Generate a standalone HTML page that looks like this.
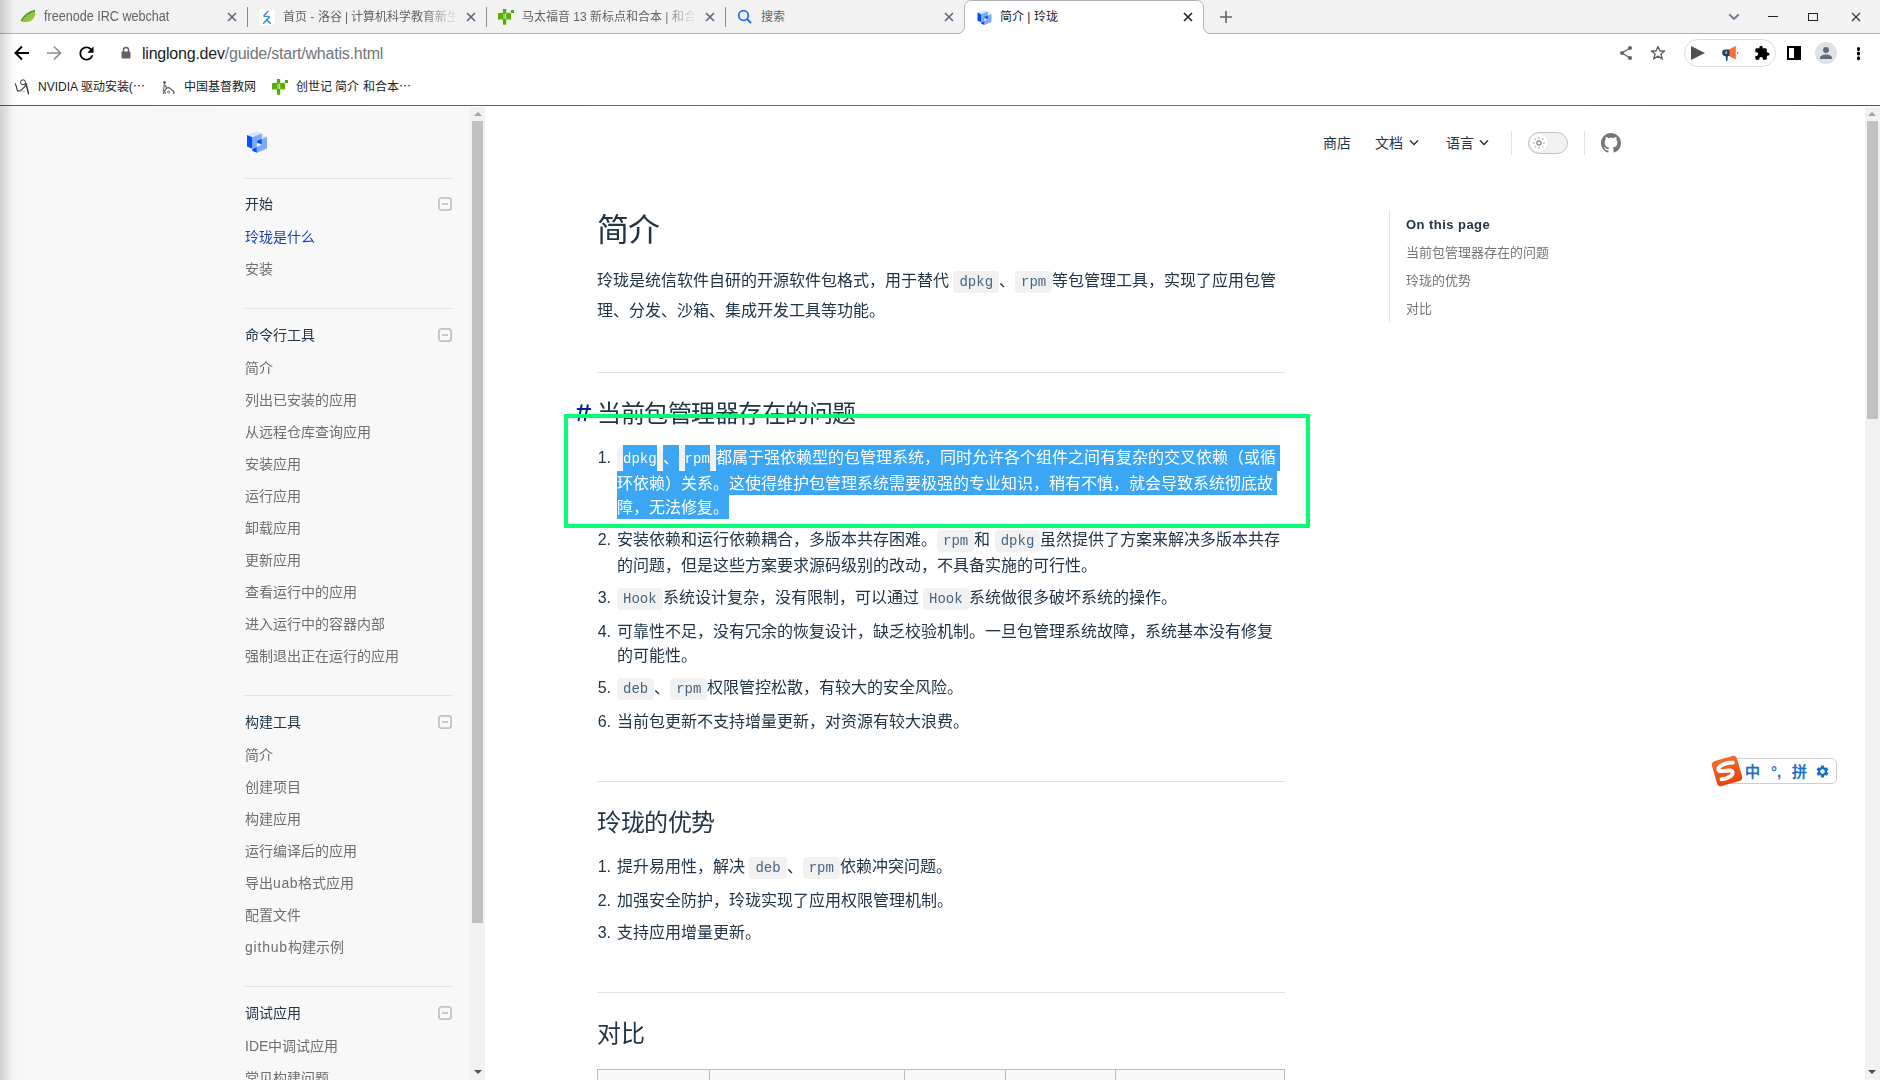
<!DOCTYPE html>
<html lang="zh-CN">
<head>
<meta charset="utf-8">
<style>
*{box-sizing:border-box;margin:0;padding:0}
html,body{width:1880px;height:1080px;overflow:hidden;background:#fff}
body{position:relative;font-family:"Liberation Sans",sans-serif;color:#213547}
.abs{position:absolute}
/* ---------- chrome ---------- */
#tabbar{position:absolute;left:0;top:0;width:1880px;height:34px;background:#f2f2f2;border-bottom:1px solid #b1b3b7}
.tab{position:absolute;top:0;height:34px;font-size:12px;color:#5f6368;white-space:nowrap}
.tab .t{position:absolute;top:9px;line-height:16px;overflow:hidden}
.tab .x{position:absolute;top:12px;width:10px;height:10px}
.sep{position:absolute;top:7px;width:1px;height:20px;background:#8b8b8b}
#active{position:absolute;left:964px;top:0;width:240px;height:35px;background:#fff;border:1px solid #b5b5b5;border-bottom:none;border-radius:7px 7px 0 0}
#toolbar{position:absolute;left:0;top:34px;width:1880px;height:71px;background:#fff}
#gradline{position:absolute;left:0;top:105px;width:1880px;height:1px;background:linear-gradient(90deg,#c41e5a 0%,#b92a7a 16%,#a03ac0 32%,#4668c8 43%,#2a90c2 53%,#0a94b8 80%,#0864b2 99%)}
/* ---------- page ---------- */
#sidebar{position:absolute;left:0;top:107px;width:470px;height:973px;background:#f8f8f8}
#sbtrack{position:absolute;left:470px;top:107px;width:15px;height:973px;background:#f1f1f1}
#sbthumb{position:absolute;left:472px;top:121px;width:11px;height:802px;background:#c1c1c1}
#pgtrack{position:absolute;left:1865px;top:107px;width:15px;height:973px;background:#f1f1f1}
#pgthumb{position:absolute;left:1867px;top:121px;width:11px;height:298px;background:#c1c1c1}
.arr-up{position:absolute;width:0;height:0;border-left:4px solid transparent;border-right:4px solid transparent;border-bottom:4px solid #a3a3a3}
.arr-dn{position:absolute;width:0;height:0;border-left:4px solid transparent;border-right:4px solid transparent;border-top:4px solid #505050}
.sb{position:absolute;left:244.5px;font-size:14px;line-height:20px;white-space:nowrap}
.sbt{color:#213547}
.sbi{color:#6e6e6e}
.sbh{position:absolute;left:245px;width:208px;height:1px;background:#e2e2e3}
.col{position:absolute;left:438px;width:14px;height:14px}
#shadow{position:absolute;left:0;top:0;width:20px;height:1080px;background:linear-gradient(90deg,rgba(0,0,0,.16) 0px,rgba(0,0,0,.113) 4px,rgba(0,0,0,.073) 8px,rgba(0,0,0,.024) 12px,rgba(0,0,0,.008) 16px,rgba(0,0,0,0) 20px)}
.doc{position:absolute;left:597px;white-space:nowrap;color:#213547}
.p{font-size:16px;line-height:28px}
code{font-family:"Liberation Mono",monospace;font-size:14px;color:#476582;background:#f1f1f1;border-radius:4px;padding:3px 6px}
.hr{position:absolute;left:597px;width:688px;height:1px;background:#e2e2e3}
.ln{position:absolute;left:617px;font-size:16px;line-height:24px;color:#213547;white-space:nowrap}
.mk{position:absolute;left:560px;width:51px;text-align:right;font-size:16px;line-height:24px;color:#213547}
.sel{position:absolute;background:#3aa6f4}
code.sc{background:transparent;color:#fff}

.toc{position:absolute;left:1406px;font-size:13px;color:#757575;white-space:nowrap}
.doc,.ln,.mk,.sb,.toc,.gs{will-change:transform}
</style>
</head>
<body>
<!-- tab bar -->
<div id="tabbar"></div>
<svg class="abs" style="left:940px;top:0" width="290" height="35" viewBox="940 0 290 35"><path d="M956.5 34A8 8 0 0 0 964.5 26V7A6.5 6.5 0 0 1 971 0.5H1197A6.5 6.5 0 0 1 1203.5 7V26A8 8 0 0 0 1211.5 34Z" fill="#fff"/><path d="M950 33.5H956.5A7 7 0 0 0 964.5 26.5V7A6.5 6.5 0 0 1 971 0.5H1197A6.5 6.5 0 0 1 1203.5 7V26.5A7 7 0 0 0 1211.5 33.5H1220" fill="none" stroke="#b1b3b7" stroke-width="1"/></svg>
<div class="sep" style="left:247px"></div>
<div class="sep" style="left:486px"></div>
<div class="sep" style="left:725px"></div>
<div class="tab" style="left:0">
  <svg class="abs" style="left:20px;top:10px" width="16" height="13" viewBox="0 0 16 13"><path d="M1 11 C3 5 9 1 15 0.5 C16 6 13 12 6 12 C4 12 2 12 1 11Z" fill="#8cc63f"/><path d="M1 11 C4 6 9 2 15 0.5" stroke="#4f7a28" stroke-width="1.2" fill="none"/></svg>
  <div class="t" style="left:44px;top:8px;width:170px;font-size:14px;transform:scaleX(.9);transform-origin:0 0">freenode IRC webchat</div>
  <svg class="x" style="left:227px" viewBox="0 0 10 10"><path d="M1 1L9 9M9 1L1 9" stroke="#5d6578" stroke-width="1.6"/></svg>
</div>
<div class="tab" style="left:0">
  <div class="abs" style="left:259px;top:9px;width:16px;height:16px;background:#fff;border-radius:3px"></div>
  <svg class="abs" style="left:255px;top:5px" width="24" height="24" viewBox="255 5 24 24"><path d="M267.8 11.4L264.2 15.3Q263.6 16.1 264.6 16.3L268.6 16.6Q269.8 16.8 269 17.8L263.6 23.3M266.6 19.6L270.3 23.3" stroke="#3a8bd8" stroke-width="1.5" fill="none" stroke-linecap="round" stroke-linejoin="round"/></svg>
  <div class="t" style="left:283px;width:175px;-webkit-mask-image:linear-gradient(90deg,#000 80%,transparent)">首页 - 洛谷 | 计算机科学教育新生态</div>
  <svg class="x" style="left:466px" viewBox="0 0 10 10"><path d="M1 1L9 9M9 1L1 9" stroke="#5d6578" stroke-width="1.6"/></svg>
</div>
<div class="tab" style="left:0">
  <svg class="abs" style="left:492px;top:4px" width="30" height="24" viewBox="266 74 30 24"><rect x="276.9" y="79" width="3.3" height="15.7" fill="#55ab05"/><path d="M272 83.3Q274.5 82.3 277 83V89.6Q274.5 88.8 272 89.8Z" fill="#5aae03"/><path d="M280.2 83Q282.6 82.3 285 83.3V89.8Q282.6 88.8 280.2 89.6Z" fill="#5aae03"/><rect x="277.6" y="83.6" width=".7" height="5.4" fill="#fff"/><rect x="278.9" y="83.6" width=".7" height="5.4" fill="#fff"/><rect x="284.9" y="80.1" width="3.1" height="2.9" rx=".6" fill="#4aa300"/></svg>
  <div class="t" style="left:522px;width:175px;-webkit-mask-image:linear-gradient(90deg,#000 80%,transparent)">马太福音 13 新标点和合本 | 和合本</div>
  <svg class="x" style="left:705px" viewBox="0 0 10 10"><path d="M1 1L9 9M9 1L1 9" stroke="#5d6578" stroke-width="1.6"/></svg>
</div>
<div class="tab" style="left:0">
  <svg class="abs" style="left:737px;top:9px" width="16" height="16" viewBox="0 0 16 16"><circle cx="6.5" cy="6.5" r="4.8" stroke="#1a73e8" stroke-width="1.8" fill="none"/><path d="M10 10L14 14" stroke="#1a73e8" stroke-width="2"/></svg>
  <div class="t" style="left:761px;width:175px">搜索</div>
  <svg class="x" style="left:944px" viewBox="0 0 10 10"><path d="M1 1L9 9M9 1L1 9" stroke="#5d6578" stroke-width="1.6"/></svg>
</div>
<div class="tab" style="left:0;color:#202124">
  <svg class="abs" style="left:974px;top:6.5px" width="21" height="21" viewBox="0 0 30 30"><path d="M5 8L15 4.2L19.7 6.2L10.3 10.2Z" fill="#dde7fb"/><path d="M19.7 6.2L25 10L19.7 12Z" fill="#dde7fb"/><path d="M10.3 10.2L19.7 6.2V12L25 10V21.6L14.8 25.8V20L10.3 21.8Z" fill="#7fa9f9"/><path d="M5 8L10.3 10.2V21.8L5 19.6Z" fill="#0052ff"/><path d="M15 14L19.7 12V17L15 15.6Z" fill="#0052ff"/><path d="M10.3 22L14.8 20V25.8L10.3 23.8Z" fill="#0052ff"/><path d="M14.8 16L19.6 17.6L14.8 20Z" fill="#f0f4fd"/></svg>
  <div class="t" style="left:1000px;width:175px">简介 | 玲珑</div>
  <svg class="x" style="left:1183px" viewBox="0 0 10 10"><path d="M1 1L9 9M9 1L1 9" stroke="#202124" stroke-width="1.6"/></svg>
</div>
<svg class="abs" style="left:1219px;top:10px" width="14" height="14" viewBox="0 0 14 14"><path d="M7 1V13M1 7H13" stroke="#5f6368" stroke-width="1.6"/></svg>
<!-- window controls -->
<svg class="abs" style="left:1728px;top:13px" width="12" height="8" viewBox="0 0 12 8"><path d="M1.3 1.3L6 6L10.7 1.3" stroke="#6a7390" stroke-width="1.8" fill="none"/></svg>
<div class="abs" style="left:1768px;top:16px;width:10px;height:1.3px;background:#222"></div>
<div class="abs" style="left:1808px;top:13px;width:10px;height:8px;border:1.3px solid #222"></div>
<svg class="abs" style="left:1851px;top:12px" width="10" height="10" viewBox="0 0 10 10"><path d="M1 1L9 9M9 1L1 9" stroke="#333" stroke-width="1.2"/></svg>

<!-- toolbar -->
<div id="toolbar"></div>
<svg class="abs" style="left:14px;top:45px" width="16" height="16" viewBox="0 0 16 16"><path d="M15 8H2M8 1.5L1.5 8L8 14.5" stroke="#000" stroke-width="1.9" fill="none"/></svg>
<svg class="abs" style="left:46px;top:45px" width="16" height="16" viewBox="0 0 16 16"><path d="M1 8H14M8 1.5L14.5 8L8 14.5" stroke="#8f8f8f" stroke-width="1.7" fill="none"/></svg>
<svg class="abs" style="left:75.5px;top:42.5px" width="21" height="21" viewBox="0 0 24 24"><path fill="#000" d="M17.65 6.35C16.2 4.9 14.21 4 12 4c-4.420 0-7.99 3.58-7.99 8s3.57 8 7.99 8c3.73 0 6.840-2.55 7.73-6h-2.08c-.82 2.330-3.04 4-5.65 4-3.31 0-6-2.69-6-6s2.69-6 6-6c1.66 0 3.14.69 4.22 1.78L13 11h7V4l-2.35 2.35z"/></svg>
<svg class="abs" style="left:121px;top:46px" width="10" height="13" viewBox="0 0 10 13"><path d="M2.5 6V4A2.5 2.5 0 0 1 7.5 4V6" stroke="#5f6368" stroke-width="1.5" fill="none"/><rect x="0.5" y="5.5" width="9" height="7" rx="1" fill="#5f6368"/></svg>
<div class="abs" style="left:142px;top:44px;font-size:16px;line-height:20px;letter-spacing:-0.22px;color:#202124;white-space:nowrap">linglong.dev<span style="color:#70757a">/guide/start/whatis.html</span></div>
<!-- toolbar right -->
<svg class="abs" style="left:1619px;top:45px" width="14" height="16" viewBox="0 0 14 16"><circle cx="11" cy="3" r="2" fill="#5f6368"/><circle cx="3" cy="8" r="2" fill="#5f6368"/><circle cx="11" cy="13" r="2" fill="#5f6368"/><path d="M11 3L3 8L11 13" stroke="#5f6368" stroke-width="1.4" fill="none"/></svg>
<svg class="abs" style="left:1650px;top:45px" width="16" height="16" viewBox="0 0 16 16"><path d="M8 1.5L9.9 6H14.7L10.9 9L12.3 14L8 11.1L3.7 14L5.1 9L1.3 6H6.1Z" stroke="#5f6368" stroke-width="1.4" fill="none" stroke-linejoin="round"/></svg>
<div class="abs" style="left:1684px;top:39px;width:92px;height:28px;border:1px solid #dadce0;border-radius:14px"></div>
<svg class="abs" style="left:1690px;top:46px" width="16" height="14" viewBox="0 0 16 14"><path d="M1 0L15 7L1 14Z" fill="#505050"/></svg>
<svg class="abs" style="left:1718px;top:42px" width="24" height="22" viewBox="1718 42 24 22"><path d="M1729 49.5L1735.9 45.8V59.5L1729 56.1Z" fill="#ff6a35"/><path d="M1725.5 49.5H1729.3V56.1H1725.5A3.3 3.3 0 0 1 1725.5 49.5Z" fill="#1d3f63"/><path d="M1725.6 56L1727.8 56L1727.3 61L1726.2 61Z" fill="#1d3f63"/><rect x="1725.2" y="51.2" width="2" height="2.8" fill="#a7a7a7"/><circle cx="1737.6" cy="53" r=".7" fill="#1d3f63"/><path d="M1736.3 45.5V59.8" stroke="#cfe8ff" stroke-width=".6"/></svg>
<svg class="abs" style="left:1753.6px;top:45.1px" width="16.2" height="16.2" viewBox="0 0 24 24"><path fill="#000" d="M20.5 11H19V7c0-1.1-.9-2-2-2h-4V3.5C13 2.12 11.88 1 10.5 1S8 2.120 8 3.5V5H4c-1.1 0-1.99.9-1.99 2v3.8H3.5c1.49 0 2.7 1.21 2.7 2.7s-1.21 2.7-2.7 2.7H2V20c0 1.1.9 2 2 2h3.8v-1.5c0-1.49 1.21-2.7 2.7-2.7 1.49 0 2.7 1.21 2.7 2.7V22H17c1.1 0 2-.9 2-2v-4h1.5c1.38 0 2.5-1.12 2.5-2.5S21.88 11 20.5 11z"/></svg>
<div class="abs" style="left:1787px;top:46px;width:14px;height:14px;border:2px solid #000;border-right:7px solid #000"></div>
<div class="abs" style="left:1815px;top:42px;width:22px;height:22px;border-radius:50%;background:#dee1e6"></div>
<svg class="abs" style="left:1818px;top:45px" width="16" height="16" viewBox="0 0 16 16"><circle cx="8" cy="5" r="3" fill="#5f6a7d"/><path d="M2 13.5C2 10.5 5 9.5 8 9.5S14 10.5 14 13.5V14H2Z" fill="#5f6a7d"/></svg>
<div class="abs" style="left:1856.8px;top:47.3px;width:3.4px;height:3.4px;border-radius:50%;background:#000;box-shadow:0 4.6px 0 #000,0 9.2px 0 #000"></div>
<!-- bookmarks -->
<svg class="abs" style="left:10px;top:74px" width="30" height="24" viewBox="10 74 30 24"><circle cx="23" cy="82.3" r="2.5" stroke="#333" stroke-width="1" fill="none"/><path d="M15.3 83.3L17.6 91Q22 91.2 26.2 84.3" stroke="#333" stroke-width="1.1" fill="none"/><path d="M25.8 83L28.7 94.2" stroke="#333" stroke-width="1.4" fill="none"/><path d="M18 91.2H25" stroke="#aaa" stroke-width="1" fill="none"/></svg>
<div class="abs" style="left:38px;top:79px;font-size:12px;line-height:16px;color:#202124;white-space:nowrap">NVIDIA 驱动安装(⋯</div>
<svg class="abs" style="left:155px;top:74px" width="30" height="24" viewBox="155 74 30 24"><circle cx="164.5" cy="82.6" r="1.3" fill="#444"/><path d="M164.3 84L163.3 94" stroke="#666" stroke-width="1" fill="none"/><path d="M164.5 85Q166.6 86 166.3 88.5L164.6 91.2L165.5 94" stroke="#555" stroke-width="1.1" fill="none"/><path d="M166.5 88.2L169 87.6L173.8 91.6V94" stroke="#555" stroke-width="1.2" fill="none"/><circle cx="168.6" cy="92" r="1.1" stroke="#666" stroke-width=".9" fill="none"/></svg>
<div class="abs" style="left:184px;top:79px;font-size:12px;line-height:16px;color:#202124;white-space:nowrap">中国基督教网</div>
<svg class="abs" style="left:266px;top:74px" width="30" height="24" viewBox="266 74 30 24"><rect x="276.9" y="79" width="3.3" height="15.7" fill="#55ab05"/><path d="M272 83.3Q274.5 82.3 277 83V89.6Q274.5 88.8 272 89.8Z" fill="#5aae03"/><path d="M280.2 83Q282.6 82.3 285 83.3V89.8Q282.6 88.8 280.2 89.6Z" fill="#5aae03"/><rect x="277.6" y="83.6" width=".7" height="5.4" fill="#fff"/><rect x="278.9" y="83.6" width=".7" height="5.4" fill="#fff"/><rect x="284.9" y="80.1" width="3.1" height="2.9" rx=".6" fill="#4aa300"/></svg>
<div class="abs" style="left:296px;top:79px;font-size:12px;line-height:16px;color:#202124;white-space:nowrap">创世记 简介 和合本⋯</div>
<div id="gradline"></div>

<!-- sidebar -->
<div id="sidebar"></div>
<div id="sbtrack"></div>
<div id="sbthumb"></div>
<div class="arr-up" style="left:473.5px;top:112px"></div>
<div class="arr-dn" style="left:473.5px;top:1070px"></div>
<svg class="abs" style="left:242px;top:127px" width="30" height="30" viewBox="0 0 30 30"><path d="M5 8L15 4.2L19.7 6.2L10.3 10.2Z" fill="#dde7fb"/><path d="M19.7 6.2L25 10L19.7 12Z" fill="#dde7fb"/><path d="M10.3 10.2L19.7 6.2V12L25 10V21.6L14.8 25.8V20L10.3 21.8Z" fill="#7fa9f9"/><path d="M5 8L10.3 10.2V21.8L5 19.6Z" fill="#0052ff"/><path d="M15 14L19.7 12V17L15 15.6Z" fill="#0052ff"/><path d="M10.3 22L14.8 20V25.8L10.3 23.8Z" fill="#0052ff"/><path d="M14.8 16L19.6 17.6L14.8 20Z" fill="#f0f4fd"/></svg>
<div class="sbh" style="top:178px"></div>

<div class="sb sbt" style="top:194px">开始</div><svg class="col" style="top:197px" viewBox="0 0 14 14"><rect x=".9" y=".9" width="12.2" height="12.2" rx="2.6" stroke="#c2c2c2" stroke-width="1.8" fill="none"/><path d="M4 7H10" stroke="#c2c2c2" stroke-width="1.8"/></svg>
<div class="sb" style="top:227px;color:#1b3fae">玲珑是什么</div>
<div class="sb sbi" style="top:259px">安装</div>
<div class="sbh" style="top:308px"></div>
<div class="sb sbt" style="top:325px">命令行工具</div><svg class="col" style="top:328px" viewBox="0 0 14 14"><rect x=".9" y=".9" width="12.2" height="12.2" rx="2.6" stroke="#c2c2c2" stroke-width="1.8" fill="none"/><path d="M4 7H10" stroke="#c2c2c2" stroke-width="1.8"/></svg>
<div class="sb sbi" style="top:358px">简介</div>
<div class="sb sbi" style="top:390px">列出已安装的应用</div>
<div class="sb sbi" style="top:422px">从远程仓库查询应用</div>
<div class="sb sbi" style="top:454px">安装应用</div>
<div class="sb sbi" style="top:486px">运行应用</div>
<div class="sb sbi" style="top:518px">卸载应用</div>
<div class="sb sbi" style="top:550px">更新应用</div>
<div class="sb sbi" style="top:582px">查看运行中的应用</div>
<div class="sb sbi" style="top:614px">进入运行中的容器内部</div>
<div class="sb sbi" style="top:646px">强制退出正在运行的应用</div>
<div class="sbh" style="top:695px"></div>
<div class="sb sbt" style="top:712px">构建工具</div><svg class="col" style="top:715px" viewBox="0 0 14 14"><rect x=".9" y=".9" width="12.2" height="12.2" rx="2.6" stroke="#c2c2c2" stroke-width="1.8" fill="none"/><path d="M4 7H10" stroke="#c2c2c2" stroke-width="1.8"/></svg>
<div class="sb sbi" style="top:745px">简介</div>
<div class="sb sbi" style="top:777px">创建项目</div>
<div class="sb sbi" style="top:809px">构建应用</div>
<div class="sb sbi" style="top:841px">运行编译后的应用</div>
<div class="sb sbi" style="top:873px">导出<span style="letter-spacing:.6px">uab</span>格式应用</div>
<div class="sb sbi" style="top:905px">配置文件</div>
<div class="sb sbi" style="top:937px"><span style="letter-spacing:.8px">github</span>构建示例</div>
<div class="sbh" style="top:986px"></div>
<div class="sb sbt" style="top:1003px">调试应用</div><svg class="col" style="top:1006px" viewBox="0 0 14 14"><rect x=".9" y=".9" width="12.2" height="12.2" rx="2.6" stroke="#c2c2c2" stroke-width="1.8" fill="none"/><path d="M4 7H10" stroke="#c2c2c2" stroke-width="1.8"/></svg>
<div class="sb sbi" style="top:1036px">IDE中调试应用</div>
<div class="sb sbi" style="top:1068px">常见构建问题</div>

<!-- page scrollbar -->
<div id="pgtrack"></div>
<div id="pgthumb"></div>
<div class="arr-up" style="left:1868px;top:112px"></div>
<div class="arr-dn" style="left:1868px;top:1070px"></div>

<!-- navbar -->
<div class="abs" style="left:1323px;top:133px;font-size:14px;line-height:20px;white-space:nowrap">商店</div>
<div class="abs" style="left:1375px;top:133px;font-size:14px;line-height:20px;white-space:nowrap">文档</div>
<svg class="abs" style="left:1409px;top:139px" width="10" height="7" viewBox="0 0 10 7"><path d="M1 1.5L5 5.5L9 1.5" stroke="#213547" stroke-width="1.5" fill="none"/></svg>
<div class="abs" style="left:1446px;top:133px;font-size:14px;line-height:20px;white-space:nowrap">语言</div>
<svg class="abs" style="left:1479px;top:139px" width="10" height="7" viewBox="0 0 10 7"><path d="M1 1.5L5 5.5L9 1.5" stroke="#213547" stroke-width="1.5" fill="none"/></svg>
<div class="abs" style="left:1511px;top:131px;width:1px;height:24px;background:#e2e2e3"></div>
<div class="abs" style="left:1528px;top:132px;width:40px;height:22px;border-radius:11px;border:1px solid #c2c2c4;background:#f1f1f1"></div>
<div class="abs" style="left:1530px;top:134px;width:18px;height:18px;border-radius:50%;background:#fff;box-shadow:0 1px 2px rgba(0,0,0,.06)"></div>
<svg class="abs" style="left:1533px;top:137px" width="12" height="12" viewBox="0 0 12 12"><circle cx="6" cy="6" r="2.2" stroke="#555" stroke-width="1" fill="none"/><g fill="#777"><rect x="5.4" y="0.4" width="1.2" height="1.2"/><rect x="5.4" y="10.4" width="1.2" height="1.2"/><rect x="0.4" y="5.4" width="1.2" height="1.2"/><rect x="10.4" y="5.4" width="1.2" height="1.2"/><circle cx="2.2" cy="2.2" r=".6"/><circle cx="9.8" cy="2.2" r=".6"/><circle cx="2.2" cy="9.8" r=".6"/><circle cx="9.8" cy="9.8" r=".6"/></g></svg>
<div class="abs" style="left:1584px;top:131px;width:1px;height:24px;background:#e2e2e3"></div>
<svg class="abs" style="left:1601px;top:133px" width="20" height="20" viewBox="0 0 16 16"><path fill="#757575" d="M8 0C3.58 0 0 3.58 0 8c0 3.54 2.29 6.53 5.47 7.59.4.07.55-.17.55-.38 0-.19-.01-.82-.01-1.49-2.01.37-2.53-.49-2.69-.94-.09-.23-.48-.94-.82-1.13-.28-.15-.68-.52-.01-.53.63-.01 1.08.58 1.23.82.72 1.21 1.87.87 2.33.66.07-.52.28-.87.51-1.07-1.78-.2-3.640-.89-3.64-3.95 0-.87.31-1.590.82-2.15-.08-.2-.36-1.02.08-2.12 0 0 .67-.21 2.2.82.64-.18 1.32-.27 2-.27.68 0 1.36.09 2 .27 1.53-1.04 2.2-.82 2.2-.82.44 1.1.16 1.92.08 2.12.51.56.82 1.27.82 2.15 0 3.07-1.87 3.75-3.65 3.95.29.25.54.73.54 1.48 0 1.07-.01 1.93-.01 2.2 0 .21.15.46.55.38A8.013 8.013 0 0016 8c0-4.42-3.58-8-8-8z"/></svg>

<!-- doc content -->
<div class="doc" style="top:209.5px;font-size:32px;line-height:40px;letter-spacing:-0.64px">简介</div>
<div class="doc p" style="top:267px">玲珑是统信软件自研的开源软件包格式，用于替代 <code>dpkg</code>、<code>rpm</code>等包管理工具，实现了应用包管</div>
<div class="doc p" style="top:297px">理、分发、沙箱、集成开发工具等功能。</div>
<div class="hr" style="top:372px"></div>
<svg class="abs" style="left:570px;top:400px" width="26" height="26" viewBox="570 400 26 26"><g stroke="#00238f" stroke-width="2" stroke-linecap="round" fill="none"><path d="M581.6 405.2L578.6 420.2M587.8 405.2L584.8 420.2M577.6 409H590.2M576.6 415.6H589.2"/></g></svg>
<div class="doc" style="top:397.5px;font-size:24px;line-height:32px;letter-spacing:-0.48px">当前包管理器存在的问题</div>

<code class="abs" style="left:617px;top:448px;width:45.6px;height:22px;padding:0"></code>
<code class="abs" style="left:678.6px;top:448px;width:37.2px;height:22px;padding:0"></code>
<div class="sel" style="left:623px;top:445px;width:33.6px;height:26px"></div>
<div class="sel" style="left:662.6px;top:445px;width:16px;height:26px"></div>
<div class="sel" style="left:684.6px;top:445px;width:25.2px;height:26px"></div>
<div class="sel" style="left:715.8px;top:445px;width:564.2px;height:26px"></div>
<div class="sel" style="left:617px;top:471px;width:660px;height:24px"></div>
<div class="sel" style="left:617px;top:495px;width:112px;height:24px"></div>
<div class="mk" style="top:446px">1.</div>
<div class="ln" style="top:446px;color:#fff"><code class="sc">dpkg</code>、<code class="sc">rpm</code>都属于强依赖型的包管理系统，同时允许各个组件之间有复杂的交叉依赖（或循</div>
<div class="ln" style="top:472px;color:#fff">环依赖）关系。这使得维护包管理系统需要极强的专业知识，稍有不慎，就会导致系统彻底故</div>
<div class="ln" style="top:496px;color:#fff">障，无法修复。</div>
<div class="mk" style="top:528px">2.</div>
<div class="ln" style="top:528px">安装依赖和运行依赖耦合，多版本共存困难。<code>rpm</code>和 <code>dpkg</code>虽然提供了方案来解决多版本共存</div>
<div class="ln" style="top:554px">的问题，但是这些方案要求源码级别的改动，不具备实施的可行性。</div>
<div class="mk" style="top:586px">3.</div>
<div class="ln" style="top:586px"><code>Hook</code>系统设计复杂，没有限制，可以通过 <code>Hook</code>系统做很多破坏系统的操作。</div>
<div class="mk" style="top:620px">4.</div>
<div class="ln" style="top:620px">可靠性不足，没有冗余的恢复设计，缺乏校验机制。一旦包管理系统故障，系统基本没有修复</div>
<div class="ln" style="top:644px">的可能性。</div>
<div class="mk" style="top:676px">5.</div>
<div class="ln" style="top:676px"><code>deb</code>、<code>rpm</code>权限管控松散，有较大的安全风险。</div>
<div class="mk" style="top:710px">6.</div>
<div class="ln" style="top:710px">当前包更新不支持增量更新，对资源有较大浪费。</div>

<div class="hr" style="top:781px"></div>
<div class="doc" style="top:807px;font-size:24px;line-height:32px;letter-spacing:-0.48px">玲珑的优势</div>
<div class="mk" style="top:855px">1.</div>
<div class="ln" style="top:855px">提升易用性，解决 <code>deb</code>、<code>rpm</code>依赖冲突问题。</div>
<div class="mk" style="top:889px">2.</div>
<div class="ln" style="top:889px">加强安全防护，玲珑实现了应用权限管理机制。</div>
<div class="mk" style="top:921px">3.</div>
<div class="ln" style="top:921px">支持应用增量更新。</div>
<div class="hr" style="top:992px"></div>
<div class="doc" style="top:1018px;font-size:24px;line-height:32px;letter-spacing:-0.48px">对比</div>
<div class="abs" style="left:597px;top:1069px;width:688px;height:20px;border:1px solid #bdbdbd;border-bottom:none;background:#f8f8f8"></div>
<div class="abs" style="left:709px;top:1069px;width:1px;height:11px;background:#bdbdbd"></div><div class="abs" style="left:904px;top:1069px;width:1px;height:11px;background:#bdbdbd"></div><div class="abs" style="left:1005px;top:1069px;width:1px;height:11px;background:#bdbdbd"></div><div class="abs" style="left:1115px;top:1069px;width:1px;height:11px;background:#bdbdbd"></div>

<div class="abs" style="left:564px;top:414px;width:746px;height:114px;border:4px solid #06fd76"></div>

<!-- toc -->
<div class="abs" style="left:1389px;top:210px;width:1px;height:112px;background:#e2e2e3"></div>
<div class="toc" style="top:216px;font-size:13px;line-height:18px;font-weight:bold;color:#213547;letter-spacing:.45px">On this page</div>
<div class="toc" style="top:244px;line-height:18px">当前包管理器存在的问题</div>
<div class="toc" style="top:272px;line-height:18px">玲珑的优势</div>
<div class="toc" style="top:300px;line-height:18px">对比</div>

<!-- IME bar -->
<div class="abs" style="left:1722px;top:758px;width:115px;height:26px;border:1.5px solid #d0d0d0;border-radius:5px;background:#fff"></div>
<svg class="abs" style="left:1710px;top:755px" width="34" height="32" viewBox="0 0 34 32"><defs><linearGradient id="sg" x1="0" y1="0" x2="0" y2="1"><stop offset="0" stop-color="#f46a2e"/><stop offset="1" stop-color="#e8440a"/></linearGradient></defs><g transform="rotate(-16 17 16)"><rect x="4" y="3" width="26" height="26" rx="4" fill="url(#sg)"/><path d="M25 9.5C18 7.5 9 8.5 9 12.8C9 16 22 14.5 22 18.5C22 22.5 14 23.5 9.5 22.5" stroke="#fff" stroke-width="3.9" fill="none" stroke-linecap="round"/></g></svg>
<div class="abs" style="left:1744.5px;top:762px;font-size:15px;line-height:20px;font-weight:bold;color:#1a6fc8;white-space:nowrap">中</div>
<div class="abs" style="left:1771px;top:762px;font-size:15px;line-height:20px;font-weight:bold;color:#1a6fc8;white-space:nowrap">°,</div>
<div class="abs" style="left:1792px;top:762px;font-size:15px;line-height:20px;font-weight:bold;color:#1a6fc8;white-space:nowrap">拼</div>
<svg class="abs" style="left:1815px;top:763.5px" width="15" height="15" viewBox="0 0 24 24"><path fill="#1a6fc8" d="M19.14 12.94c.04-.3.06-.61.06-.94 0-.32-.02-.64-.07-.94l2.03-1.58c.18-.14.23-.41.12-.61l-1.92-3.32c-.12-.22-.37-.29-.59-.22l-2.39.96c-.5-.38-1.03-.7-1.62-.94l-.36-2.54c-.04-.24-.24-.41-.48-.41h-3.84c-.24 0-.43.17-.47.41l-.36 2.54c-.59.24-1.13.57-1.62.94l-2.39-.96c-.22-.08-.47 0-.59.22L2.74 8.87c-.12.21-.08.47.12.61l2.03 1.58c-.05.3-.09.63-.09.94s.02.64.07.94l-2.03 1.58c-.18.14-.23.41-.12.61l1.92 3.32c.12.22.37.29.59.22l2.39-.96c.5.38 1.03.7 1.62.94l.36 2.54c.05.24.24.41.48.41h3.84c.24 0 .44-.17.47-.41l.36-2.54c.59-.24 1.13-.56 1.62-.94l2.39.96c.22.08.47 0 .59-.22l1.92-3.32c.12-.22.07-.47-.12-.61l-2.01-1.58zM12 15.6c-1.98 0-3.6-1.62-3.6-3.6s1.62-3.6 3.6-3.6 3.6 1.62 3.6 3.6-1.620 3.6-3.6 3.6z"/></svg>

<div id="shadow"></div>
</body>
</html>
